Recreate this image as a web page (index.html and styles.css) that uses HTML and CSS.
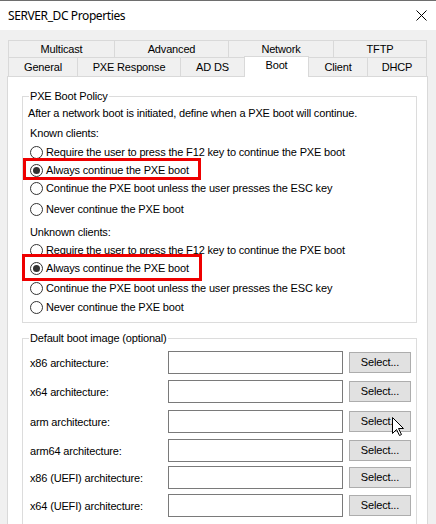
FILE: index.html
```html
<!DOCTYPE html>
<html>
<head>
<meta charset="utf-8">
<link rel="stylesheet" href="styles.css">
</head>
<body>
<div class="window">
  <div class="titlebar">
    <span class="title">SERVER_DC Properties</span>
    <svg class="close" viewBox="0 0 11 11"><path d="M0.5 0.5 L10.5 10.5 M10.5 0.5 L0.5 10.5" stroke="#000" stroke-width="1" fill="none"/></svg>
  </div>
  <div class="tabs">
    <div class="tabrow row1">
      <div class="tab w-multicast">Multicast</div>
      <div class="tab w-advanced">Advanced</div>
      <div class="tab w-network">Network</div>
      <div class="tab w-tftp last">TFTP</div>
    </div>
    <div class="tabrow row2">
      <div class="tab w-general">General</div>
      <div class="tab w-pxe">PXE Response</div>
      <div class="tab w-adds">AD DS</div>
      <div class="tab w-boot sel">Boot</div>
      <div class="tab w-client">Client</div>
      <div class="tab w-dhcp last">DHCP</div>
    </div>
  </div>
  <div class="panel">
    <fieldset class="group policy">
      <legend>PXE Boot Policy</legend>
      <div class="line intro">After a network boot is initiated, define when a PXE boot will continue.</div>
      <div class="line head known">Known clients:</div>
      <div class="line opt m1"><span class="radio"></span><span>Require the user to press the F12 key to continue the PXE boot</span></div>
      <div class="line opt hl hl-a"><span class="radio on"></span><span>Always continue the PXE boot</span></div>
      <div class="line opt"><span class="radio"></span><span>Continue the PXE boot unless the user presses the ESC key</span></div>
      <div class="line opt m3"><span class="radio"></span><span>Never continue the PXE boot</span></div>
      <div class="line head m5">Unknown clients:</div>
      <div class="line opt"><span class="radio"></span><span>Require the user to press the F12 key to continue the PXE boot</span></div>
      <div class="line opt hl hl-b"><span class="radio on"></span><span>Always continue the PXE boot</span></div>
      <div class="line opt m2"><span class="radio"></span><span>Continue the PXE boot unless the user presses the ESC key</span></div>
      <div class="line opt m1"><span class="radio"></span><span>Never continue the PXE boot</span></div>
    </fieldset>
    <fieldset class="group images">
      <legend>Default boot image (optional)</legend>
      <div class="frow"><span class="lab">x86 architecture:</span><span class="tb"></span><span class="btn">Select...</span></div>
      <div class="frow g6"><span class="lab">x64 architecture:</span><span class="tb"></span><span class="btn">Select...</span></div>
      <div class="frow g7"><span class="lab">arm architecture:</span><span class="tb"></span><span class="btn">Select...</span></div>
      <div class="frow g6"><span class="lab">arm64 architecture:</span><span class="tb"></span><span class="btn">Select...</span></div>
      <div class="frow g4"><span class="lab">x86 (UEFI) architecture:</span><span class="tb"></span><span class="btn">Select...</span></div>
      <div class="frow g5"><span class="lab">x64 (UEFI) architecture:</span><span class="tb"></span><span class="btn">Select...</span></div>
    </fieldset>
  </div>
  <svg class="cursor" viewBox="0 0 13 20" width="13" height="20"><path d="M0.5 0.5 L0.5 16.5 L4.5 12.5 L7.5 18.5 L9.5 17.5 L6.5 11.5 L11.5 11.5 Z" fill="#fff" stroke="#000" stroke-width="1" stroke-linejoin="miter"/></svg>
</div>
</body>
</html>
```
FILE: styles.css
```css
html, body {
  margin: 0;
  background: #f0f0f0;
}
body {
  font: 11px "Liberation Sans", Arial, sans-serif;
  letter-spacing: -0.16px;
  color: #000;
}
.window {
  position: relative;
  width: 436px;
  height: 524px;
  overflow: hidden;
  background: #f0f0f0;
}
.titlebar {
  height: 30px;
  box-sizing: border-box;
  border-top: 1px solid #6e6e6e;
  background: #fff;
  display: flex;
  align-items: center;
  justify-content: space-between;
  padding: 0 9px 0 8px;
}
.title {
  font: 12px "Noto Sans", sans-serif;
  letter-spacing: -0.4px;
}
.close {
  width: 11px;
  height: 11px;
}
.tabs {
  padding: 10px 0 0 8px;
}
.tabrow {
  display: flex;
}
.tab {
  box-sizing: border-box;
  border-top: 1px solid #d9d9d9;
  border-left: 1px solid #d9d9d9;
  text-align: center;
  background: #f0f0f0;
  white-space: nowrap;
}
.row1 .tab { height: 17px; line-height: 16px; }
.row2 .tab { height: 19px; line-height: 19px; }
.tab.last { border-right: 1px solid #d9d9d9; }
.row2 .tab.sel {
  background: #fff;
  height: 21px;
  margin-top: -1px;
  margin-bottom: -1px;
  border-right: 1px solid #d9d9d9;
  line-height: 17px;
  position: relative;
  z-index: 1;
}
.w-multicast { width: 106px; }
.w-advanced { width: 114px; }
.w-network { width: 105px; }
.w-tftp { width: 94px; }
.w-general { width: 69px; }
.w-pxe { width: 103px; }
.w-adds { width: 64px; }
.w-boot { width: 65px; }
.w-client { width: 59px; margin-left: -1px; }
.w-dhcp { width: 60px; }

.panel {
  margin-left: 7px;
  width: 421px;
  height: 448px;
  box-sizing: border-box;
  border: 1px solid #d9d9d9;
  border-bottom: none;
  background: #fff;
  padding: 0 0 0 14px;
}
.group {
  margin: 12px 0 0 0;
  padding: 1px 0 6px 0;
  border: 1px solid #dcdcdc;
  width: 395px;
  box-sizing: border-box;
  min-width: 0;
}
.group.images {
  margin-top: 8px;
  padding-top: 6px;
  padding-bottom: 20px;
}
legend {
  padding: 0 1px;
  margin-left: 6px;
  line-height: 14px;
}
.line {
  height: 18px;
  line-height: 18px;
  padding-left: 7px;
  white-space: nowrap;
}
.line.intro { padding-left: 5px; margin-top: 0; }
.line.known { margin-top: 2px; }
.m1 { margin-top: 1px; }
.m2 { margin-top: 2px; }
.m3 { margin-top: 3px; }
.m5 { margin-top: 5px; }
.opt {
  display: flex;
  align-items: center;
  gap: 3px;
}
.radio {
  width: 13px;
  height: 13px;
  box-sizing: border-box;
  border: 1px solid #333;
  border-radius: 50%;
  background: #fff;
  display: flex;
  align-items: center;
  justify-content: center;
  flex: none;
}
.radio.on::after {
  content: "";
  width: 7px;
  height: 7px;
  border-radius: 50%;
  background: #333;
}
.hl { position: relative; }
.hl::after {
  content: "";
  position: absolute;
  box-sizing: border-box;
  border: 3px solid #ee0000;
}
.hl-a::after { left: 0; top: -3px; width: 178px; height: 22px; }
.hl-b::after { left: -1px; top: -5px; width: 180px; height: 27px; }

.frow {
  display: flex;
  align-items: center;
  height: 23px;
  padding-left: 7px;
}
.g4 { margin-top: 4px; }
.g5 { margin-top: 5px; }
.g6 { margin-top: 6px; }
.g7 { margin-top: 7px; }
.lab {
  width: 138px;
  flex: none;
  white-space: nowrap;
}
.tb {
  width: 175px;
  height: 23px;
  box-sizing: border-box;
  border: 1px solid #7a7a7a;
  background: #fff;
  flex: none;
}
.btn {
  margin-left: 6px;
  width: 62px;
  height: 21px;
  box-sizing: border-box;
  border: 1px solid #adadad;
  background: #e1e1e1;
  text-align: center;
  line-height: 19px;
  flex: none;
}
.cursor {
  position: absolute;
  left: 392px;
  top: 417px;
}
```
